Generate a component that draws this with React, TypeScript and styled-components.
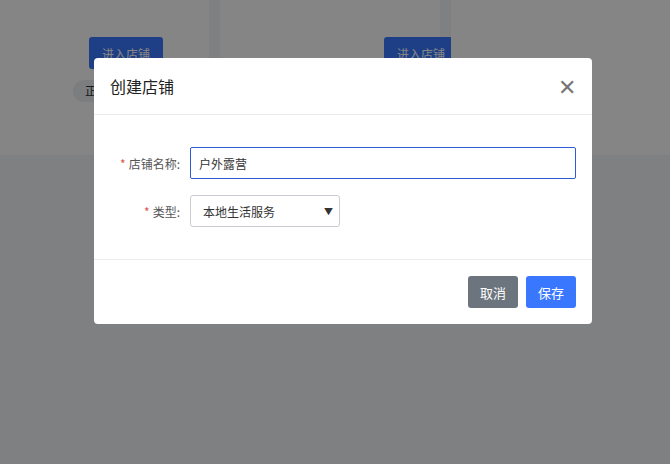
import React from "react";
import styled, { createGlobalStyle } from "styled-components";

const Global = createGlobalStyle`
  html, body { margin: 0; padding: 0; }
  body { font-family: "Noto Sans CJK SC", "Liberation Sans", sans-serif; background: #f4f5f9; }
  * { box-sizing: border-box; }
`;

const Page = styled.div`
  position: relative;
  width: 670px;
  height: 464px;
  overflow: hidden;
  background: #f4f5f9;
`;

const CardRow = styled.div`
  display: grid;
  grid-template-columns: 209px 220px 219px;
  column-gap: 11px;
  height: 155px;
`;

const Card = styled.div`
  background: #fff;
  position: relative;
`;

const EnterBtn = styled.div`
  position: absolute;
  top: 37px;
  left: ${(p: { $left: number }) => p.$left}px;
  width: 74px;
  height: 32px;
  border-radius: 3px;
  background: #3a7aff;
  color: #fff;
  font-size: 12px;
  display: flex;
  align-items: center;
  justify-content: center;
`;

const Tag = styled.div`
  position: absolute;
  top: 80px;
  left: 73px;
  width: 60px;
  height: 22px;
  border-radius: 11px;
  background: #eef0f3;
  color: #333;
  font-size: 12px;
  padding-left: 12px;
  line-height: 22px;
`;

const Overlay = styled.div`
  position: absolute;
  inset: 0;
  background: rgba(0, 0, 0, 0.48);
`;

const Modal = styled.div`
  position: absolute;
  left: 94px;
  top: 58px;
  width: 498px;
  background: #fff;
  border-radius: 4px;
  color: #333;
`;

const Header = styled.div`
  height: 57px;
  border-bottom: 1px solid #e9ecef;
  display: flex;
  align-items: center;
  justify-content: space-between;
  padding: 0 16px 0 16px;
  font-size: 16px;
  color: #222;
`;

const Close = styled.div`
  color: #777;
  font-size: 22px;
  line-height: 1;
  padding-top: 4px;
  font-family: "Liberation Sans", sans-serif;
`;

const Body = styled.div`
  padding: 32px 16px 32px 16px;
  display: flex;
  flex-direction: column;
  gap: 16px;
  border-bottom: 1px solid #e9ecef;
`;

const Row = styled.div`
  display: flex;
  align-items: center;
  height: 32px;
`;

const Label = styled.div`
  width: 80px;
  margin-right: 0;
  text-align: right;
  font-size: 12px;
  color: #555;
  padding-right: 10px;
  & span { color: #d9534f; margin-right: 3px; }
`;

const Input = styled.div`
  flex: 1;
  height: 32px;
  border: 1px solid #2d5bd8;
  border-radius: 2px;
  font-size: 12px;
  color: #333;
  display: flex;
  align-items: center;
  padding-left: 8px;
`;

const Select = styled.div`
  width: 150px;
  height: 32px;
  border: 1px solid #c9ccd3;
  border-radius: 3px;
  font-size: 12px;
  color: #333;
  display: flex;
  align-items: center;
  justify-content: space-between;
  padding: 0 6px 0 12px;
  & i { font-style: normal; font-size: 9px; color: #333; }
`;

const Footer = styled.div`
  display: flex;
  justify-content: flex-end;
  gap: 8px;
  padding: 16px 16px 16px;
`;

const Btn = styled.div<{ $bg: string }>`
  width: 50px;
  height: 32px;
  border-radius: 3px;
  background: ${(p) => p.$bg};
  color: #fff;
  font-size: 13px;
  display: flex;
  align-items: center;
  justify-content: center;
`;

export default function App() {
  return (
    <Page>
      <Global />
      <CardRow>
        <Card>
          <EnterBtn $left={89}>进入店铺</EnterBtn>
          <Tag>正常</Tag>
        </Card>
        <Card>
          <EnterBtn $left={164}>进入店铺</EnterBtn>
        </Card>
        <Card />
      </CardRow>
      <Overlay />
      <Modal>
        <Header>
          <span>创建店铺</span>
          <Close>✕</Close>
        </Header>
        <Body>
          <Row>
            <Label><span>*</span>店铺名称:</Label>
            <Input>户外露营</Input>
          </Row>
          <Row>
            <Label><span>*</span>类型:</Label>
            <Select>本地生活服务<i>▼</i></Select>
          </Row>
        </Body>
        <Footer>
          <Btn $bg="#6c757d">取消</Btn>
          <Btn $bg="#3a77ff">保存</Btn>
        </Footer>
      </Modal>
    </Page>
  );
}
